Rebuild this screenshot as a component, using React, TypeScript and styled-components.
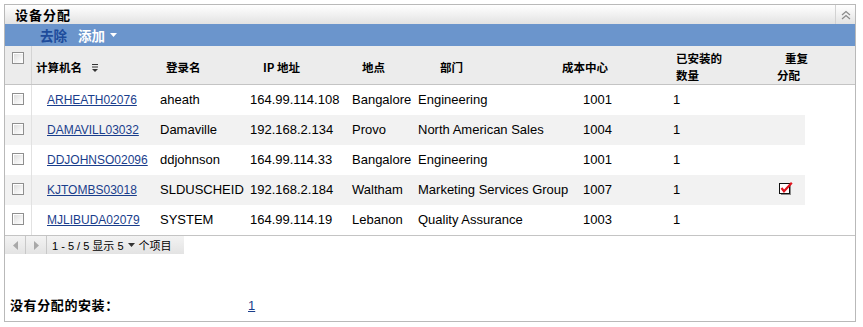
import React from 'react';
import styled, { createGlobalStyle } from 'styled-components';

const GlobalStyle = createGlobalStyle`
  html, body {
    margin: 0;
    padding: 0;
    background: #ffffff;
  }
  body {
    font-family: 'Liberation Sans', 'Noto Sans CJK SC', sans-serif;
    font-size: 13px;
    color: #000;
  }
`;

const COLUMNS = '27px 123px 90px 102px 66px 165px 90px 92px 45px';

export const Panel = styled.section`
  margin: 4px 0 0 4px;
  width: 852px;
  height: 318px;
  box-sizing: border-box;
  border: 1px solid #b9b9b9;
  display: flex;
  flex-direction: column;
  background: #fff;
`;

export const TitleBar = styled.header`
  height: 19px;
  display: flex;
  align-items: stretch;
  justify-content: space-between;
  background: linear-gradient(to bottom, #ffffff 0%, #f1f1f1 50%, #e2e2e2 100%);
`;

export const Title = styled.h2`
  margin: 0;
  padding-left: 10px;
  font-family: 'Noto Sans CJK SC', sans-serif;
  font-size: 13px;
  font-weight: 700;
  line-height: 19px;
  letter-spacing: 1px;
`;

export const CollapseButton = styled.button`
  width: 20px;
  border: 0;
  border-left: 1px solid #d2d2d2;
  background: transparent;
  padding: 0;
  display: flex;
  align-items: center;
  justify-content: center;
  cursor: pointer;
`;

export const Toolbar = styled.nav`
  height: 22px;
  background: #6b95cc;
  display: flex;
  align-items: center;
  gap: 11px;
  padding-left: 35px;
`;

export const ToolButton = styled.span<{ $light?: boolean }>`
  font-family: 'Noto Sans CJK SC', sans-serif;
  font-size: 13.5px;
  font-weight: 700;
  color: ${({ $light }) => ($light ? '#ffffff' : '#1d4b9b')};
  display: inline-flex;
  align-items: center;
  gap: 5px;
  cursor: pointer;
`;

export const HeaderRow = styled.div`
  display: grid;
  grid-template-columns: ${COLUMNS} 1fr;
  min-height: 37px;
  background: #ececec;
  border-bottom: 1px solid #c4c4c4;
`;

export const HeadCell = styled.div<{ $x?: number }>`
  display: flex;
  align-items: center;
  padding-top: 4px;
  padding-left: ${({ $x }) => Math.max(0, $x ?? 0)}px;
  margin-left: ${({ $x }) => Math.min(0, $x ?? 0)}px;
  font-family: 'Noto Sans CJK SC', sans-serif;
  font-size: 11.5px;
  font-weight: 700;
  line-height: 17px;
  white-space: nowrap;
  gap: 10px;
`;

export const HeadLine = styled.span<{ $indent?: number }>`
  display: block;
  padding-left: ${({ $indent }) => $indent ?? 0}px;
`;

export const CheckHead = styled.div`
  border-right: 1px solid #d4d4d4;
  padding: 6px 0 0 7px;
`;

export const Rows = styled.div`
  border-bottom: 1px solid #c4c4c4;
`;

export const Row = styled.div<{ $striped?: boolean }>`
  display: grid;
  grid-template-columns: ${COLUMNS};
  width: max-content;
  height: 30px;
  align-items: center;
  background: ${({ $striped }) => ($striped ? '#f2f2f2' : '#ffffff')};
`;

export const CheckCell = styled.div`
  height: 100%;
  display: flex;
  align-items: center;
  padding: 0 0 3px 7px;
  box-sizing: border-box;
  border-right: 1px solid #e2e2e2;
`;

export const Cell = styled.div<{ $x?: number }>`
  padding-left: ${({ $x }) => $x ?? 5}px;
  white-space: nowrap;
  line-height: 16px;
`;

export const Link = styled.a<{ $size?: number }>`
  color: #1a3e8c;
  font-size: ${({ $size }) => $size ?? 12}px;
  text-decoration: underline;
  cursor: pointer;
`;

export const Checkbox = styled.span`
  display: inline-block;
  width: 10px;
  height: 10px;
  border: 1px solid #8f8f8f;
  background: linear-gradient(135deg, #d9d9d9 0%, #f2f2f2 60%, #ffffff 100%);
  box-shadow: inset 1px 1px 0 #ffffff;
`;

export const Pager = styled.div`
  width: 179px;
  height: 18px;
  display: flex;
  align-items: center;
  background: linear-gradient(to bottom, #f3f3f3 0%, #e3e3e3 100%);
  font-size: 11px;
`;

export const PagerArrow = styled.span`
  width: 20px;
  height: 100%;
  display: flex;
  align-items: center;
  justify-content: center;
  border-right: 1px solid #c8c8c8;
`;

export const PagerText = styled.span`
  padding-left: 5px;
  display: inline-flex;
  align-items: center;
  gap: 4px;
  white-space: nowrap;
`;

export const Footer = styled.footer`
  flex: 1;
  display: flex;
  align-items: flex-end;
  padding: 0 0 8px 5px;
`;

export const FooterLabel = styled.span`
  width: 238px;
  font-family: 'Noto Sans CJK SC', sans-serif;
  font-weight: 700;
  font-size: 13px;
  letter-spacing: 0.6px;
  line-height: 16px;
`;

const ChevronUp = () => (
  <svg width="10" height="10" viewBox="0 0 10 10">
    <path d="M1 5 L5 1.5 L9 5 M1 9 L5 5.5 L9 9" fill="none" stroke="#8a8a8a" strokeWidth="1.2" />
  </svg>
);

const CaretDown = ({ color }: { color: string }) => (
  <svg width="7" height="4" viewBox="0 0 7 4">
    <path d="M0 0 H7 L3.5 4 Z" fill={color} />
  </svg>
);

const SortIcon = () => (
  <svg width="6" height="9" viewBox="0 0 6 9">
    <path d="M0 1.5 H6 M0 4 H6" stroke="#333" strokeWidth="1.2" />
    <path d="M0 6 H6 L3 9 Z" fill="#333" />
  </svg>
);

const PagerTriangle = ({ dir }: { dir: 'left' | 'right' }) => (
  <svg width="5" height="9" viewBox="0 0 5 9">
    <path d={dir === 'left' ? 'M5 0 V9 L0 4.5 Z' : 'M0 0 V9 L5 4.5 Z'} fill="#a8a8a8" />
  </svg>
);

const CheckedMark = () => (
  <svg width="14" height="13" viewBox="0 0 14 13">
    <rect x="2" y="3" width="10" height="10" fill="#8a8a8a" />
    <rect x="0.5" y="1.5" width="10" height="10" fill="#ffffff" stroke="#111" />
    <path d="M2.5 6 L5 9.2 L12.8 0.8" fill="none" stroke="#e0141e" strokeWidth="2.2" />
  </svg>
);

type Device = {
  name: string;
  login: string;
  ip: string;
  site: string;
  dept: string;
  cost: string;
  count: string;
  dup?: boolean;
};

const devices: Device[] = [
  { name: 'ARHEATH02076', login: 'aheath', ip: '164.99.114.108', site: 'Bangalore', dept: 'Engineering', cost: '1001', count: '1' },
  { name: 'DAMAVILL03032', login: 'Damaville', ip: '192.168.2.134', site: 'Provo', dept: 'North American Sales', cost: '1004', count: '1' },
  { name: 'DDJOHNSO02096', login: 'ddjohnson', ip: '164.99.114.33', site: 'Bangalore', dept: 'Engineering', cost: '1001', count: '1' },
  { name: 'KJTOMBS03018', login: 'SLDUSCHEID', ip: '192.168.2.184', site: 'Waltham', dept: 'Marketing Services Group', cost: '1007', count: '1', dup: true },
  { name: 'MJLIBUDA02079', login: 'SYSTEM', ip: '164.99.114.19', site: 'Lebanon', dept: 'Quality Assurance', cost: '1003', count: '1' },
];

export default function App() {
  return (
    <>
      <GlobalStyle />
      <Panel>
        <TitleBar>
          <Title>设备分配</Title>
          <CollapseButton aria-label="collapse">
            <ChevronUp />
          </CollapseButton>
        </TitleBar>
        <Toolbar>
          <ToolButton>去除</ToolButton>
          <ToolButton $light>
            添加
            <CaretDown color="#ffffff" />
          </ToolButton>
        </Toolbar>

        <HeaderRow>
          <CheckHead>
            <Checkbox />
          </CheckHead>
          <HeadCell $x={4}>
            计算机名
            <SortIcon />
          </HeadCell>
          <HeadCell $x={11}>登录名</HeadCell>
          <HeadCell $x={18}>IP 地址</HeadCell>
          <HeadCell $x={15}>地点</HeadCell>
          <HeadCell $x={27}>部门</HeadCell>
          <HeadCell $x={-16}>成本中心</HeadCell>
          <HeadCell $x={8}>
            <span>
              <HeadLine>已安装的</HeadLine>
              <HeadLine>数量</HeadLine>
            </span>
          </HeadCell>
          <HeadCell $x={17}>
            <span>
              <HeadLine $indent={8}>重复</HeadLine>
              <HeadLine>分配</HeadLine>
            </span>
          </HeadCell>
          <div />
        </HeaderRow>

        <Rows>
          {devices.map((d, i) => (
            <Row key={d.name} $striped={i % 2 === 1}>
              <CheckCell>
                <Checkbox />
              </CheckCell>
              <Cell $x={15}>
                <Link>{d.name}</Link>
              </Cell>
              <Cell>{d.login}</Cell>
              <Cell>{d.ip}</Cell>
              <Cell>{d.site}</Cell>
              <Cell>{d.dept}</Cell>
              <Cell>{d.cost}</Cell>
              <Cell>{d.count}</Cell>
              <Cell $x={19}>{d.dup && <CheckedMark />}</Cell>
            </Row>
          ))}
        </Rows>

        <Pager>
          <PagerArrow>
            <PagerTriangle dir="left" />
          </PagerArrow>
          <PagerArrow>
            <PagerTriangle dir="right" />
          </PagerArrow>
          <PagerText>
            1 - 5 / 5 显示 5
            <CaretDown color="#333333" />
            个项目
          </PagerText>
        </Pager>

        <Footer>
          <FooterLabel>没有分配的安装：</FooterLabel>
          <Link $size={13}>1</Link>
        </Footer>
      </Panel>
    </>
  );
}
